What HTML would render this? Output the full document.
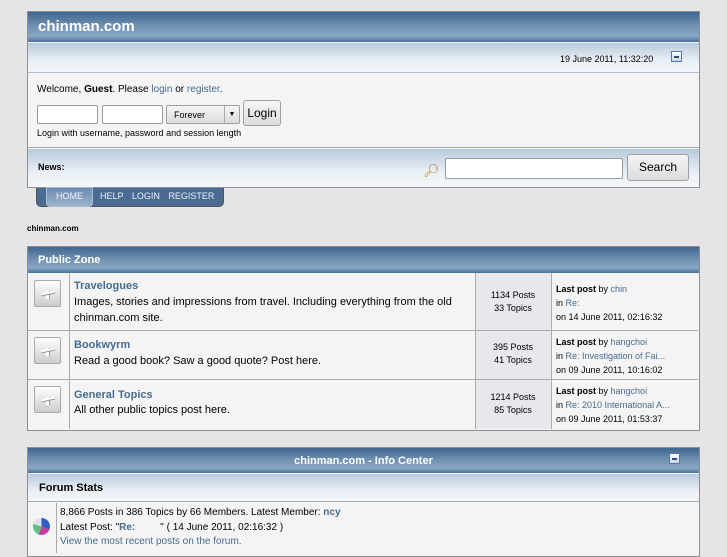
<!DOCTYPE html>
<html><head><meta charset="utf-8"><style>
*{box-sizing:border-box;margin:0;padding:0}
body{width:727px;height:545px;overflow:hidden;background:#e5e5e8;font-family:"Liberation Sans",sans-serif;font-size:10px;color:#000;position:relative}
a{color:#476c8e;text-decoration:none}
.abs{position:absolute}
.cat{background:linear-gradient(#3e6690,#6e8fb0 45%,#8aa7c3 80%,#4a7098);color:#fff;font-weight:bold}
.sub{background:linear-gradient(#b8cadc,#e9eff5 60%,#f4f7fa);}
.box{border:1px solid #8e8e8e;background:#f4f4f4}
input.t{position:absolute;height:19px;border:1px solid #9a9a9a;background:#fff;border-radius:2px}
.btn{position:absolute;border:1px solid #a0a0a0;border-radius:3px;background:linear-gradient(#f6f6f6,#dcdcdc);font-size:12px;text-align:center}
.ic{position:absolute;left:6px;width:27px;height:27px;border:1px solid #aaa;background:linear-gradient(#fff,#ccc);border-radius:2px}
.ic:after{content:"";position:absolute;left:6px;top:11px;width:14px;height:2px;background:#fff;box-shadow:0 1px 0 #999;transform:rotate(-12deg)}
.ic:before{content:"";position:absolute;left:11px;top:10px;width:3px;height:8px;background:#fff;box-shadow:1px 0 0 #999}
.row{position:absolute;left:1px;width:670px;border-top:1px solid #aaa}
.c{position:absolute;top:0;bottom:0;border-left:1px solid #aaa}
.min{position:absolute;width:11px;height:11px;border:1px solid #5577aa;background:linear-gradient(#fff,#c8d4e6)}
.min:after{content:"";position:absolute;left:2px;right:2px;top:4px;height:2px;background:#334d7a}
</style></head><body>
<div class="abs box" style="left:27px;top:11px;width:673px;height:177px"></div>
<div class="abs cat" style="left:28px;top:12px;width:671px;height:30px;font-size:15px;padding:6px 10px;font-weight:bold">chinman.com</div>
<div class="abs sub" style="left:28px;top:43px;width:671px;height:30px;border-bottom:1px solid #b0c0d0"></div>
<div class="abs" style="left:560px;top:54px;font-size:9px">19 June 2011, 11:32:20</div>
<div class="min" style="left:671px;top:51px"></div>
<div class="abs" style="left:28px;top:74px;width:671px;height:74px;background:#f4f4f4;border-bottom:1px solid #aaa"></div>
<div class="abs" style="left:37px;top:84px">Welcome, <b>Guest</b>. Please <a>login</a> or <a>register</a>.</div>
<input class="t" style="left:37px;top:105px;width:61px">
<input class="t" style="left:102px;top:105px;width:61px">
<div class="btn" style="left:166px;top:105px;width:74px;height:19px;font-size:9px;text-align:left;padding:4px 7px;border-radius:2px">Forever<span style="position:absolute;right:0;top:0;width:15px;height:17px;border-left:1px solid #aaa;font-size:7px;text-align:center;line-height:17px">▼</span></div>
<div class="btn" style="left:243px;top:100px;width:38px;height:26px;line-height:24px">Login</div>
<div class="abs" style="left:37px;top:128px;font-size:9px">Login with username, password and session length</div>
<div class="abs sub" style="left:28px;top:149px;width:671px;height:38px"></div>
<div class="abs" style="left:38px;top:162px;font-size:9px;font-weight:bold">News:</div>
<div class="abs" style="left:423px;top:163px;font-size:13px;color:#c08020">&#x1F50E;&#xFE0E;</div>
<input class="t" style="left:445px;top:158px;width:178px;height:21px">
<div class="btn" style="left:627px;top:154px;width:62px;height:27px;line-height:25px">Search</div>
<div class="abs" style="left:36px;top:188px;width:188px;height:19px;background:#4a6c92;border:1px solid #555;border-top:none;border-radius:0 0 5px 5px"></div>
<div class="abs" style="left:46px;top:187px;width:47px;height:20px;background:linear-gradient(#6b8db2,#9bb3cc);border:1px solid #aabbd0;border-radius:0 0 4px 4px"></div>
<div class="abs" style="left:56px;top:191px;font-size:9px;color:#eef">HOME</div>
<div class="abs" style="left:100px;top:191px;font-size:9px;color:#eef;word-spacing:6px">HELP LOGIN REGISTER</div>
<div class="abs" style="left:27px;top:224px;font-size:8px;font-weight:bold">chinman.com</div>

<div class="abs box" style="left:27px;top:246px;width:673px;height:185px">
<div class="abs cat" style="left:0;top:0;width:671px;height:26px;font-size:11px;padding:7px 10px">Public Zone</div>
</div>
<div class="abs" style="left:28px;top:273px;width:671px;height:157px;background:#f4f4f4">
 <div class="row" style="left:0;top:0;height:58px;border:none"><div class="ic" style="top:7px"></div><div class="c" style="left:41px"></div><div class="c" style="left:447px;width:76px;background:#e8e8ec"></div><div class="c" style="left:523px"></div>
  <div class="abs" style="left:46px;top:7px;font-size:11px;font-weight:bold;color:#476c8e">Travelogues</div>
  <div class="abs" style="left:46px;top:21px;font-size:11px;line-height:16px">Images, stories and impressions from travel. Including everything from the old<br>chinman.com site.</div>
  <div class="abs" style="left:448px;top:16px;width:74px;text-align:center;font-size:9px;line-height:13px">1134 Posts<br>33 Topics</div>
  <div class="abs" style="left:528px;top:9px;font-size:9px;line-height:14px"><b>Last post</b> by <a>chin</a><br>in <a>Re:</a><br>on 14 June 2011, 02:16:32</div>
 </div>
 <div class="row" style="left:0;top:57px;height:49px"><div class="ic" style="top:6px"></div><div class="c" style="left:41px"></div><div class="c" style="left:447px;width:76px;background:#e8e8ec"></div><div class="c" style="left:523px"></div>
  <div class="abs" style="left:46px;top:8px;font-size:11px;font-weight:bold;color:#476c8e">Bookwyrm</div>
  <div class="abs" style="left:46px;top:24px;font-size:11px">Read a good book? Saw a good quote? Post here.</div>
  <div class="abs" style="left:448px;top:10px;width:74px;text-align:center;font-size:9px;line-height:13px">395 Posts<br>41 Topics</div>
  <div class="abs" style="left:528px;top:4px;font-size:9px;line-height:14px"><b>Last post</b> by <a>hangchoi</a><br>in <a>Re: Investigation of Fai...</a><br>on 09 June 2011, 10:16:02</div>
 </div>
 <div class="row" style="left:0;top:106px;height:50px"><div class="ic" style="top:6px"></div><div class="c" style="left:41px"></div><div class="c" style="left:447px;width:76px;background:#e8e8ec"></div><div class="c" style="left:523px"></div>
  <div class="abs" style="left:46px;top:9px;font-size:11px;font-weight:bold;color:#476c8e">General Topics</div>
  <div class="abs" style="left:46px;top:24px;font-size:11px">All other public topics post here.</div>
  <div class="abs" style="left:448px;top:11px;width:74px;text-align:center;font-size:9px;line-height:13px">1214 Posts<br>85 Topics</div>
  <div class="abs" style="left:528px;top:4px;font-size:9px;line-height:14px"><b>Last post</b> by <a>hangchoi</a><br>in <a>Re: 2010 International A...</a><br>on 09 June 2011, 01:53:37</div>
 </div>
</div>

<div class="abs box" style="left:27px;top:447px;width:673px;height:110px"></div>
<div class="abs cat" style="left:28px;top:448px;width:671px;height:25px;font-size:11px;text-align:center;padding-top:7px">chinman.com - Info Center</div>
<div class="min" style="left:669px;top:453px"></div>
<div class="abs sub" style="left:28px;top:474px;width:671px;height:28px;font-size:11px;font-weight:bold;padding:8px 11px;border-bottom:1px solid #aaa">Forum Stats</div>
<div class="abs" style="left:56px;top:503px;height:50px;border-left:1px solid #aaa"></div>
<div class="abs" style="left:33px;top:518px;width:17px;height:17px;border-radius:50%;background:conic-gradient(#3060c0 0 30%,#c040a0 0 55%,#60c080 0 80%,#e0e0f0 0)"></div>
<div class="abs" style="left:60px;top:506px;font-size:10px;line-height:14.5px">8,866 Posts in 386 Topics by 66 Members. Latest Member: <a><b>ncy</b></a><br>Latest Post: "<a><b>Re:</b></a> &nbsp; &nbsp; &nbsp; &nbsp; " ( 14 June 2011, 02:16:32 )<br><a>View the most recent posts on the forum.</a></div>
</body></html>
